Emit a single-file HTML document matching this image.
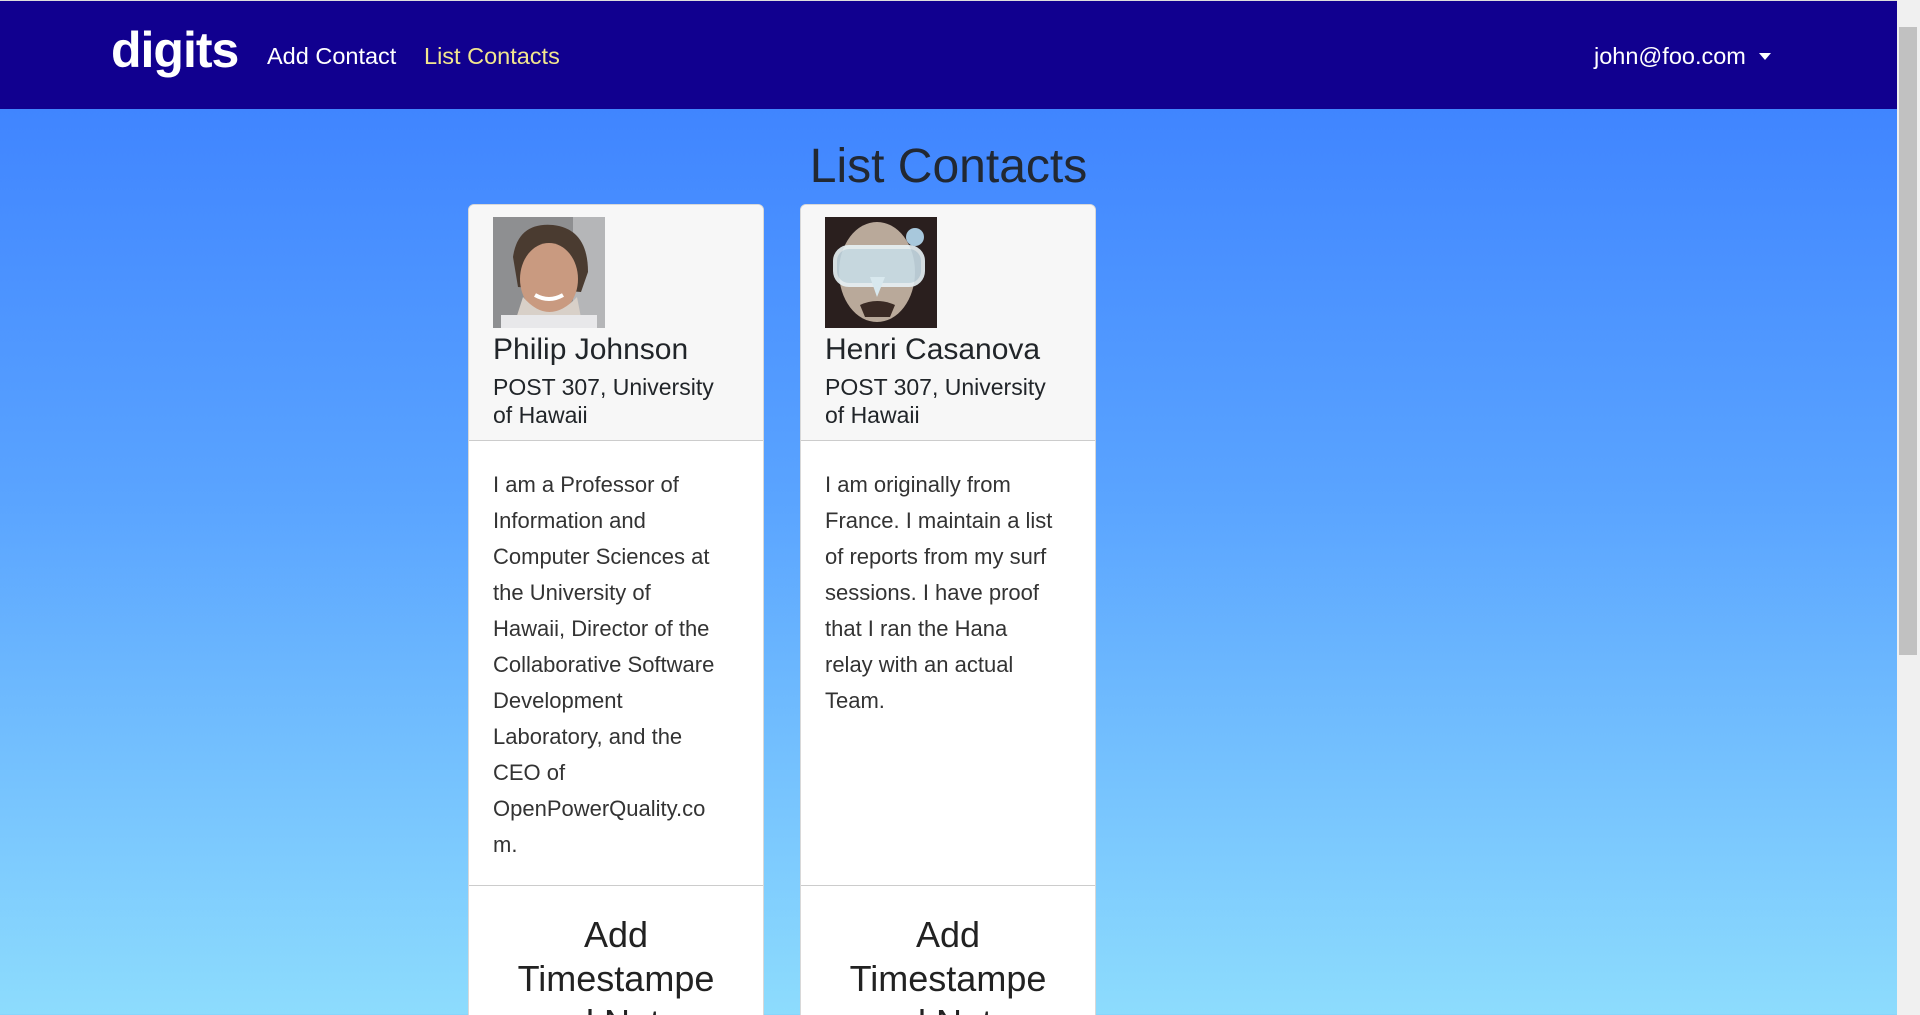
<!DOCTYPE html>
<html><head><meta charset="utf-8"><style>
*{box-sizing:border-box;margin:0;padding:0}
html,body{width:1920px;height:1015px;overflow:hidden}
body{font-family:"Liberation Sans",sans-serif;background:linear-gradient(#4085ff 109px,#5aa4ff 500px,#8ddcfd 1015px);position:relative;color:#212529}
.nav{position:absolute;left:0;top:0;width:1897px;height:109px;background:#11008f;border-top:1px solid #ddd}
.brand{position:absolute;left:111px;top:20px;font-size:50px;color:#fff;font-weight:bold;letter-spacing:-1px}
.nl{position:absolute;top:42px;font-size:23.5px;color:#fff}
.sb{position:absolute;right:0;top:0;width:23px;height:1015px;background:#f0f0f0}
.thumb{position:absolute;right:3px;top:27px;width:18px;height:628px;background:#c1c1c1}
h1{position:absolute;left:0;width:1897px;text-align:center;top:139px;font-size:48px;font-weight:normal;color:#222832}
.card{position:absolute;top:204px;width:296px;height:830px;background:#fff;border:1px solid #d8d8d8;border-radius:6px;overflow:hidden}
.hd{height:236px;background:#f7f7f7;border-bottom:1px solid #ccc;padding:12px 24px 0}
.ph{width:112px;height:111px;display:block}
.nm{font-size:30px;margin-top:3px;line-height:38px;white-space:nowrap}
.ad{font-size:23px;line-height:28px;white-space:nowrap;margin-top:4px}
.bd{height:445px;border-bottom:1px solid #ccc;padding:26px 24px 0;font-size:22px;line-height:36px;color:#333;white-space:nowrap}
.ft{text-align:center;font-size:36px;line-height:44px;padding-top:27px;color:#222}
</style></head><body>
<div class="nav">
<div class="brand">digits</div>
<div class="nl" style="left:267px">Add Contact</div>
<div class="nl" style="left:424px;color:#f2e68e">List Contacts</div>
<div class="nl" style="left:1594px">john@foo.com</div>
<svg style="position:absolute;left:1759px;top:52px" width="12" height="8"><path d="M0 0H12L6 7Z" fill="#fff"/></svg>
</div>
<div class="sb"><div class="thumb"></div></div>
<h1>List Contacts</h1>

<div class="card" style="left:468px">
<div class="hd">
<svg class="ph" viewBox="0 0 112 111"><rect width="112" height="111" fill="#8e8f91"/><rect x="80" width="32" height="111" fill="#b5b6b8"/><path d="M20 40Q25 5 60 8Q95 12 95 55L88 75L25 70Z" fill="#4a3b30"/><ellipse cx="56" cy="62" rx="29" ry="36" fill="#c99a80"/><path d="M30 80Q56 110 84 80L90 111H20Z" fill="#d8d0c8"/><path d="M42 78Q56 86 70 78" stroke="#fff" stroke-width="4" fill="none"/><rect x="8" y="98" width="96" height="13" fill="#e8e8ea"/></svg>
<div class="nm">Philip Johnson</div>
<div class="ad">POST 307, University<br>of Hawaii</div>
</div>
<div class="bd">I am a Professor of<br>Information and<br>Computer Sciences at<br>the University of<br>Hawaii, Director of the<br>Collaborative Software<br>Development<br>Laboratory, and the<br>CEO of<br>OpenPowerQuality.co<br>m.</div>
<div class="ft">Add<br>Timestampe<br>and Notes</div>
</div>

<div class="card" style="left:800px">
<div class="hd">
<svg class="ph" viewBox="0 0 112 111"><rect width="112" height="111" fill="#2a1f1e"/><ellipse cx="52" cy="55" rx="38" ry="50" fill="#b9a99a"/><rect x="10" y="30" width="88" height="38" rx="14" fill="#c8dce6" stroke="#e8f2f6" stroke-width="4" opacity=".9"/><path d="M45 60L52 80L60 60Z" fill="#d8e8ee"/><path d="M35 88Q52 80 70 88L65 100H40Z" fill="#3a2a24"/><circle cx="90" cy="20" r="9" fill="#a8c8dc"/></svg>
<div class="nm">Henri Casanova</div>
<div class="ad">POST 307, University<br>of Hawaii</div>
</div>
<div class="bd">I am originally from<br>France. I maintain a list<br>of reports from my surf<br>sessions. I have proof<br>that I ran the Hana<br>relay with an actual<br>Team.</div>
<div class="ft">Add<br>Timestampe<br>and Notes</div>
</div>
</body></html>
